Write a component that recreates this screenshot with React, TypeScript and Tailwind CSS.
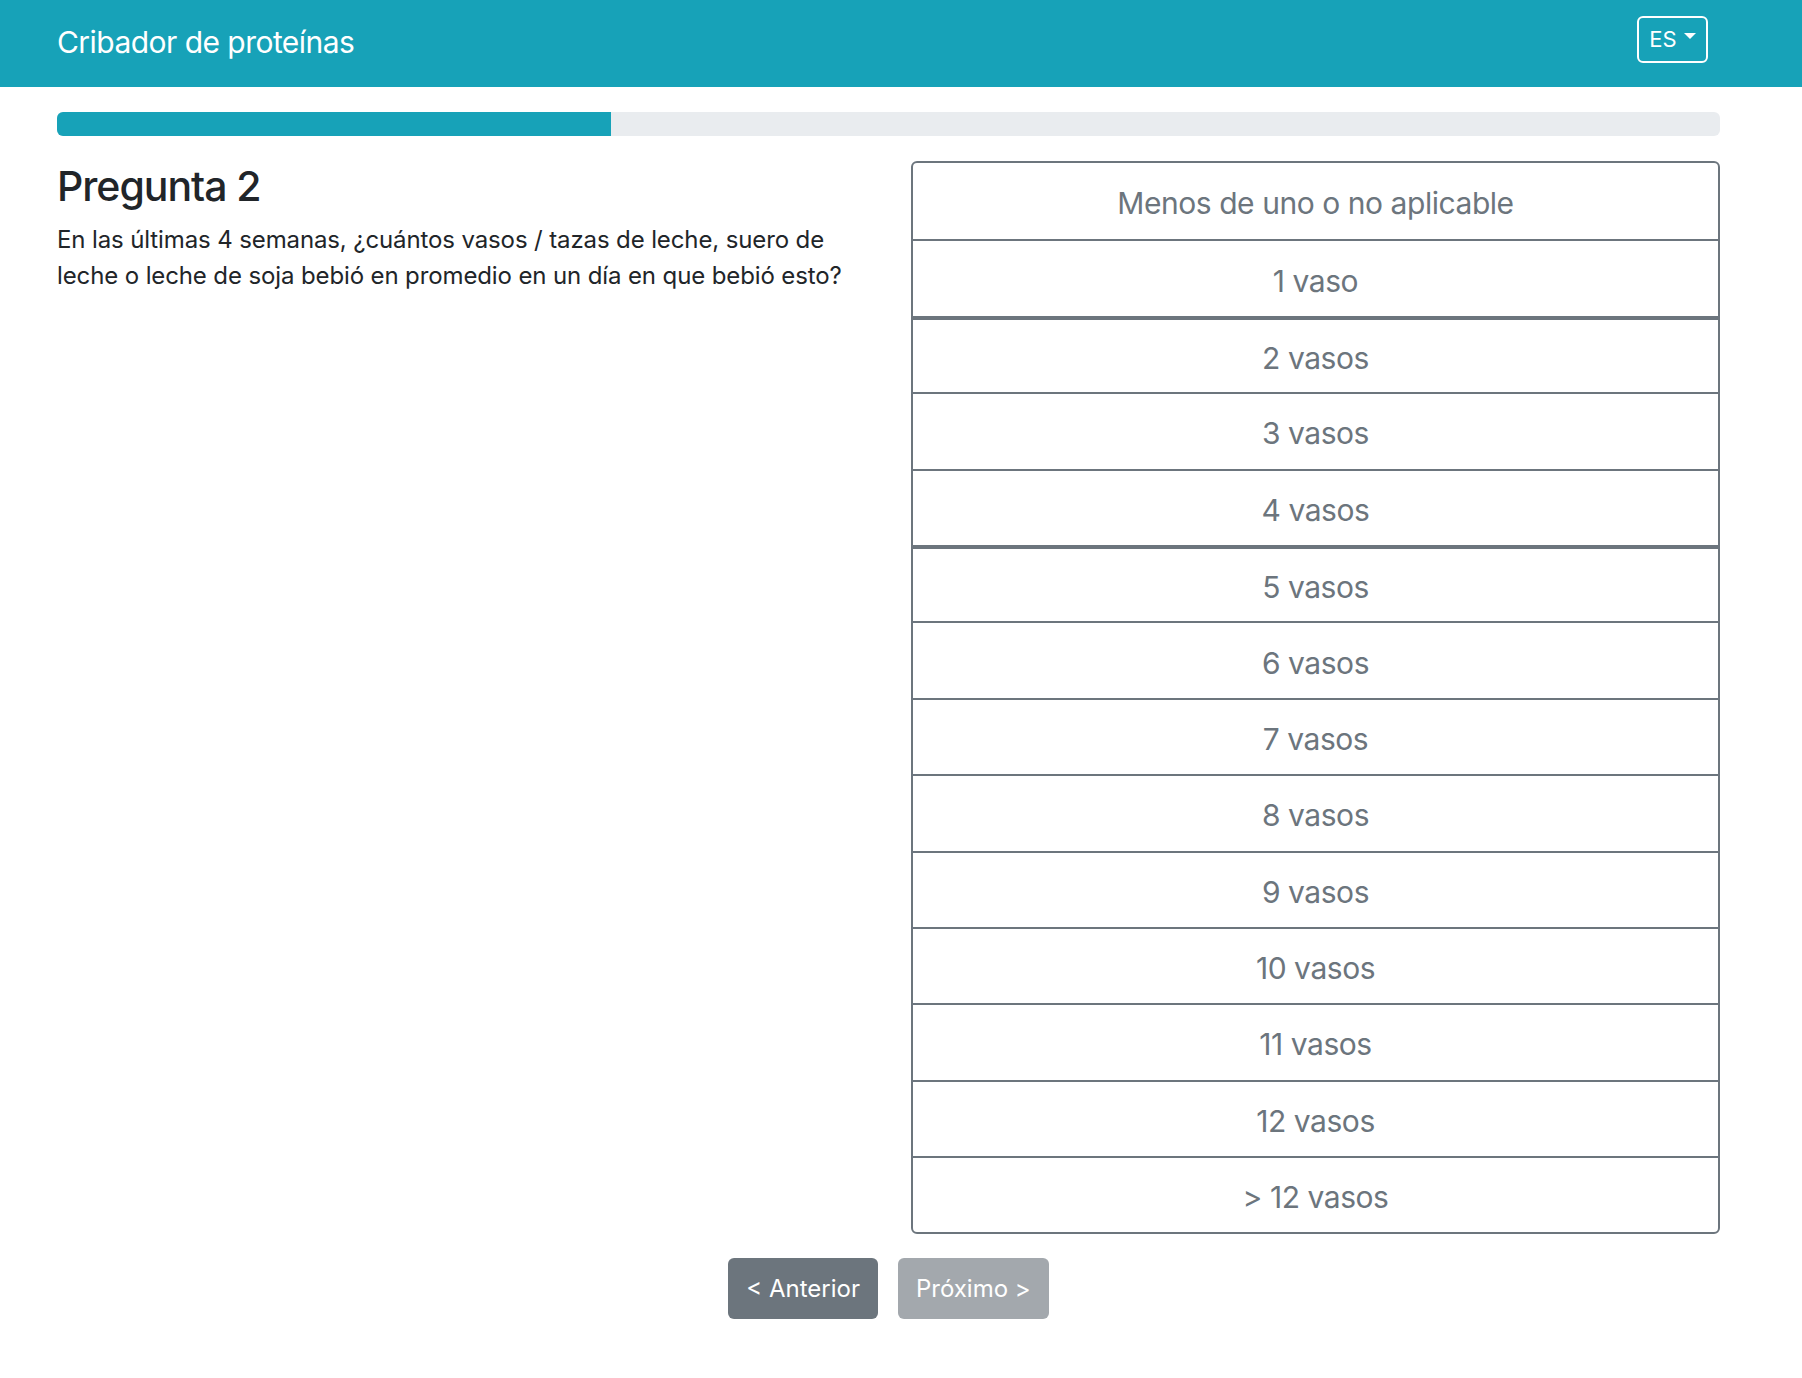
import React from 'react'

const options = [
    'Menos de uno o no aplicable',
    '1 vaso',
    '2 vasos',
    '3 vasos',
    '4 vasos',
    '5 vasos',
    '6 vasos',
    '7 vasos',
    '8 vasos',
    '9 vasos',
    '10 vasos',
    '11 vasos',
    '12 vasos',
    '> 12 vasos',
];

const App = () => {
    return (
        <div className="min-h-[1378px] bg-white text-[#212529]" style={{ fontFamily: 'Inter, "Noto Sans", sans-serif' }}>
            <nav className="h-[87px] bg-[#17a2b8] flex items-center justify-between pl-[57px] pr-[94px]">
                <span className="text-white text-[30px] leading-[36px] tracking-[-0.018em] -mt-[4px]">Cribador de proteínas</span>
                <button className="w-[71px] h-[47px] border-2 border-white rounded-[6px] text-white text-[22px] flex items-center justify-center gap-[7px] -mt-[8px]">
                    ES
                    <span className="w-0 h-0 border-l-[6px] border-r-[6px] border-t-[6px] border-l-transparent border-r-transparent border-t-white -mt-[8px]" />
                </button>
            </nav>

            <div className="pl-[57px] pr-[82px]">
                <div className="mt-[25px] h-[24px] rounded-[6px] bg-[#e9ecef] overflow-hidden">
                    <div className="h-full w-1/3 bg-[#17a2b8]" />
                </div>

                <div className="mt-[25px] grid grid-cols-2 gap-x-[45px]">
                    <div>
                        <h3 className="text-[41px] leading-[50px] font-medium tracking-[-0.025em]">Pregunta 2</h3>
                        <p className="mt-[11px] text-[24px] leading-[36px] tracking-[-0.005em]">
                            En las últimas 4 semanas, ¿cuántos vasos / tazas de leche, suero de leche o leche de soja bebió en promedio en un día en que bebió esto?
                        </p>
                    </div>

                    <div className="border-2 border-[#6c757d] rounded-[6px] flex flex-col overflow-hidden">
                        {options.map((opt, i) => (
                            <div
                                key={opt}
                                className={
                                    'h-[76.4px] pt-[5px] flex items-center justify-center text-[30px] tracking-[-0.015em] text-[#6c757d] ' +
                                    (i === 0 ? '' : i === 2 || i === 5 ? 'border-t-4 border-[#6c757d]' : 'border-t-2 border-[#6c757d]')
                                }
                            >
                                {opt}
                            </div>
                        ))}
                    </div>
                </div>

                <div className="mt-[24px] flex justify-center gap-[20px]">
                    <button className="h-[61px] px-[18px] rounded-[6px] bg-[#6c757d] text-white text-[24px]">&lt; Anterior</button>
                    <button className="h-[61px] px-[18px] rounded-[6px] bg-[#a3a8ad] text-white text-[24px] cursor-default">Próximo &gt;</button>
                </div>
            </div>
        </div>
    )
}

export default App
